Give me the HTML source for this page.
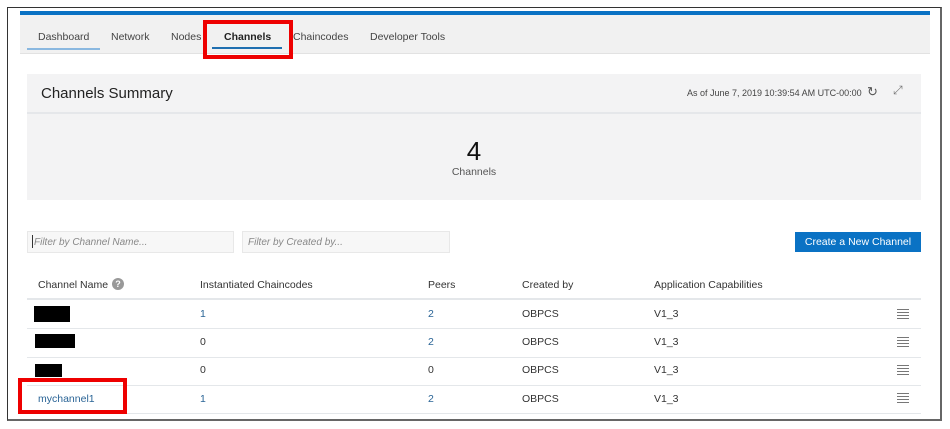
<!DOCTYPE html>
<html><head><style>
body{margin:0;width:950px;height:429px;background:#fff;font-family:"Liberation Sans",Arial,sans-serif;position:relative;overflow:hidden}
.a{position:absolute}
.t{font-size:10.5px;color:#333;white-space:nowrap}
.a.lk{color:#2a6496}
.hl{height:1px;background:#e4e7ea;left:27px;width:894px}
.red{border:4px solid #e00;box-sizing:border-box}
.blk{background:#000}
.menu{width:12px;height:10px;background:repeating-linear-gradient(#777 0 1px,transparent 1px 3px)}
</style></head><body>
<div class="a" style="left:7px;top:7px;width:935px;height:414px;border:1px solid #333;border-right:2px solid #666;border-bottom:2px solid #666;box-sizing:border-box"></div>
<div class="a" style="left:20px;top:11px;width:910px;height:4px;background:#0a72c4"></div>
<div class="a" style="left:20px;top:15px;width:910px;height:38px;background:#f1f1f1;border-bottom:1px solid #e2e2e2"></div>
<div class="a t" style="left:38px;top:31px;color:#444">Dashboard</div>
<div class="a" style="left:27px;top:48px;width:73px;height:2px;background:#8ab8e0"></div>
<div class="a t" style="left:111px;top:31px;color:#444">Network</div>
<div class="a t" style="left:171px;top:31px;color:#444">Nodes</div>
<div class="a t" style="left:224px;top:31px;font-weight:bold;color:#222">Channels</div>
<div class="a" style="left:212px;top:47px;width:70px;height:2px;background:#1f6fb0"></div>
<div class="a t" style="left:293px;top:31px;color:#444">Chaincodes</div>
<div class="a t" style="left:370px;top:31px;color:#444">Developer Tools</div>
<div class="a red" style="left:203px;top:20px;width:90px;height:39px"></div>

<div class="a" style="left:27px;top:74px;width:894px;height:126px;background:#f3f3f4"></div>
<div class="a" style="left:27px;top:112px;width:894px;height:2px;background:#e5e7ea"></div>
<div class="a" style="left:41px;top:85px;font-size:15px;color:#222">Channels Summary</div>
<div class="a t" style="left:687px;top:88px;font-size:9px;color:#444">As of June 7, 2019 10:39:54 AM UTC-00:00</div>
<div class="a" style="left:867px;top:84px;font-size:13px;color:#555">&#8635;</div>
<div class="a" style="left:893px;top:83px;font-size:12px;color:#777">&#10530;</div>
<div class="a" style="left:27px;top:136px;width:894px;text-align:center;font-size:26px;color:#111">4</div>
<div class="a" style="left:27px;top:166px;width:894px;text-align:center;font-size:10.5px;color:#555">Channels</div>

<div class="a" style="left:27px;top:231px;width:207px;height:22px;background:#f7f7f7;border:1px solid #e8e8e8;box-sizing:border-box"></div>
<div class="a" style="left:32px;top:235px;width:1px;height:13px;background:#333"></div>
<div class="a t" style="left:34px;top:237px;font-style:italic;color:#888;font-size:10px">Filter by Channel Name...</div>
<div class="a" style="left:242px;top:231px;width:208px;height:22px;background:#f7f7f7;border:1px solid #e8e8e8;box-sizing:border-box"></div>
<div class="a t" style="left:248px;top:237px;font-style:italic;color:#888;font-size:10px">Filter by Created by...</div>
<div class="a" style="left:795px;top:232px;width:126px;height:20px;background:#0a72c4;color:#fff;font-size:10.5px;text-align:center;line-height:20px">Create a New Channel</div>

<div class="a t" style="left:38px;top:279px">Channel Name</div>
<div class="a" style="left:112px;top:278px;width:12px;height:12px;border-radius:50%;background:#999;color:#fff;font-size:9px;font-weight:bold;text-align:center;line-height:12px">?</div>
<div class="a t" style="left:200px;top:279px">Instantiated Chaincodes</div>
<div class="a t" style="left:428px;top:279px">Peers</div>
<div class="a t" style="left:522px;top:279px">Created by</div>
<div class="a t" style="left:654px;top:279px">Application Capabilities</div>
<div class="a hl" style="top:298px;height:2px"></div>

<div class="a blk" style="left:34px;top:306px;width:36px;height:16px"></div>
<div class="a t lk" style="left:200px;top:308px">1</div><div class="a t lk" style="left:428px;top:308px">2</div>
<div class="a t" style="left:522px;top:308px">OBPCS</div><div class="a t" style="left:654px;top:308px">V1_3</div>
<div class="a menu" style="left:897px;top:309px"></div>
<div class="a hl" style="top:328px"></div>

<div class="a blk" style="left:35px;top:334px;width:40px;height:14px"></div>
<div class="a t" style="left:200px;top:336px">0</div><div class="a t lk" style="left:428px;top:336px">2</div>
<div class="a t" style="left:522px;top:336px">OBPCS</div><div class="a t" style="left:654px;top:336px">V1_3</div>
<div class="a menu" style="left:897px;top:337px"></div>
<div class="a hl" style="top:357px"></div>

<div class="a blk" style="left:35px;top:364px;width:27px;height:13px"></div>
<div class="a t" style="left:200px;top:364px">0</div><div class="a t" style="left:428px;top:364px">0</div>
<div class="a t" style="left:522px;top:364px">OBPCS</div><div class="a t" style="left:654px;top:364px">V1_3</div>
<div class="a menu" style="left:897px;top:365px"></div>
<div class="a hl" style="top:385px"></div>

<div class="a t lk" style="left:38px;top:393px">mychannel1</div>
<div class="a t lk" style="left:200px;top:393px">1</div><div class="a t lk" style="left:428px;top:393px">2</div>
<div class="a t" style="left:522px;top:393px">OBPCS</div><div class="a t" style="left:654px;top:393px">V1_3</div>
<div class="a menu" style="left:897px;top:393px"></div>
<div class="a hl" style="top:413px"></div>
<div class="a red" style="left:18px;top:378px;width:109px;height:36px"></div>
</body></html>
